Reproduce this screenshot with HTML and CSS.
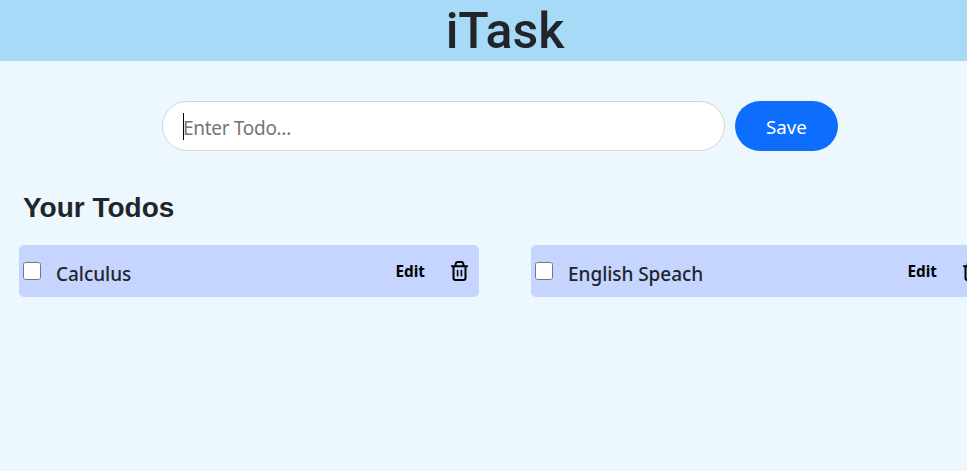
FILE: index.html
```
<!DOCTYPE html>
<html lang="en">
<head>
<meta charset="utf-8">
<title>iTask</title>
<link rel="stylesheet" href="styles.css">
</head>
<body>
<header class="navbar"><h1>iTask</h1></header>
<main>
<form class="entry">
<div class="field"><span class="caret"></span><span class="placeholder">Enter Todo...</span></div>
<button class="save" type="button">Save</button>
</form>
<h2 class="heading">Your Todos</h2>
<div class="todos">
<div class="todo">
<input type="checkbox" aria-label="Calculus"><span class="name">Calculus</span>
<span class="edit">Edit</span>
<svg class="trash" viewBox="0 0 20 20"><path d="M1.9 5.2h15.2M3.5 5.2v11.8q0 2 2 2h8q2 0 2-2V5.2M5.3 5l.5-2.5q.3-1.4 1.7-1.4h4q1.4 0 1.7 1.4l.5 2.5"/><path class="slats" d="M7.6 9.5v5.3M11.4 9.5v5.3"/></svg>
</div>
<div class="todo">
<input type="checkbox" aria-label="English Speach"><span class="name">English Speach</span>
<span class="edit">Edit</span>
<svg class="trash" viewBox="0 0 20 20"><path d="M1.9 5.2h15.2M3.5 5.2v11.8q0 2 2 2h8q2 0 2-2V5.2M5.3 5l.5-2.5q.3-1.4 1.7-1.4h4q1.4 0 1.7 1.4l.5 2.5"/><path class="slats" d="M7.6 9.5v5.3M11.4 9.5v5.3"/></svg>
</div>
</div>
</main>
</body>
</html>
```
FILE: styles.css
```
* { box-sizing: border-box; }
body {
  margin: 0;
  height: 471px;
  overflow: hidden;
  background: #ecf7fe;
  color: #212529;
  font-family: "Noto Sans", sans-serif;
}
.navbar {
  height: 61px;
  padding-left: 43px;
  background: #a7daf7;
  text-align: center;
}
h1 {
  margin: 0;
  font: 500 50px/62px Roboto, sans-serif;
}
.entry {
  display: flex;
  gap: 10px;
  margin: 40px 0 0 162px;
}
.field {
  display: flex;
  align-items: center;
  width: 563px;
  height: 50px;
  padding-left: 20px;
  border: 1px solid #d3d7da;
  border-radius: 25px;
  background: #fff;
}
.caret { width: 1px; height: 27px; background: #000; }
.placeholder {
  margin-left: -1px;
  padding-top: 3px;
  color: #757575;
  font-size: 19px;
  letter-spacing: -0.3px;
}
.save {
  width: 103px;
  height: 50px;
  padding: 0;
  border: 0;
  border-radius: 25px;
  background: #0d6efd;
  color: #fff;
  font: 18.7px "Noto Sans", sans-serif;
}
.heading {
  margin: 40px 0 0 23px;
  font: 600 28px/34px "Liberation Sans", sans-serif;
}
.todos {
  display: flex;
  gap: 52px;
  margin: 20px 0 0 19px;
}
.todo {
  display: flex;
  flex: none;
  align-items: center;
  width: 460px;
  height: 52px;
  padding: 0 9px 0 4px;
  border-radius: 5px;
  background: #c5d5ff;
}
.todo input { width: 18px; height: 18px; margin: 0 15px 0 0; }
.name { padding-top: 6px; font-size: 19px; font-weight: 500; letter-spacing: -0.05px; }
.edit { margin-left: auto; color: #000; font-size: 15.3px; font-weight: 700; }
.trash {
  width: 20px;
  height: 20px;
  margin-left: 25px;
  overflow: visible;
  fill: none;
  stroke: #000;
  stroke-width: 2;
  stroke-linecap: round;
  stroke-linejoin: round;
}
.slats { stroke-width: 1.6; }
```
